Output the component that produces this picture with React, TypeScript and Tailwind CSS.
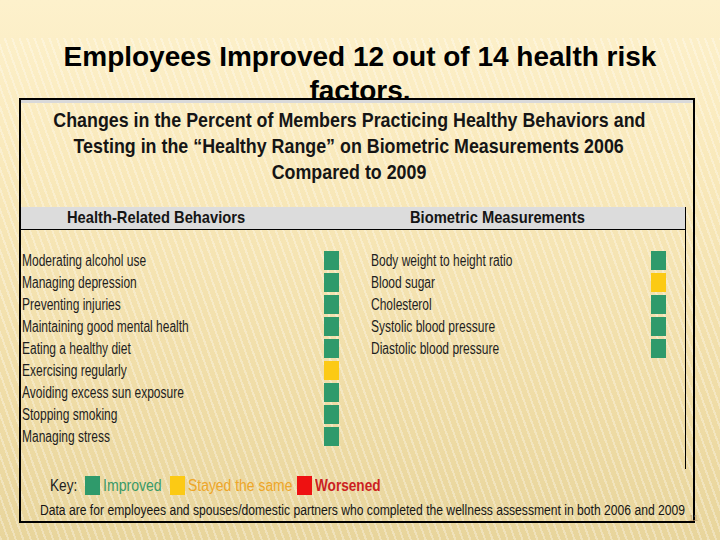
import React from 'react'

type Mark = 'g' | 'y' | 'r'

const behaviors: [string, Mark][] = [
  ['Moderating alcohol use', 'g'],
  ['Managing depression', 'g'],
  ['Preventing injuries', 'g'],
  ['Maintaining good mental health', 'g'],
  ['Eating a healthy diet', 'g'],
  ['Exercising regularly', 'y'],
  ['Avoiding excess sun exposure', 'g'],
  ['Stopping smoking', 'g'],
  ['Managing stress', 'g'],
]

const biometrics: [string, Mark][] = [
  ['Body weight to height ratio', 'g'],
  ['Blood sugar', 'y'],
  ['Cholesterol', 'g'],
  ['Systolic blood pressure', 'g'],
  ['Diastolic blood pressure', 'g'],
]

const Swatch: React.FC<{ c: Mark }> = ({ c }) => (
  <span
    className={
      'block w-[15px] h-[19px] shrink-0 ' +
      (c === 'g' ? 'bg-[#2f9a6b]' : c === 'y' ? 'bg-[#fcca14]' : 'bg-[#ee1111]')
    }
  />
)

// condensed text, like the Arial Narrow in the original chart
const TitleLine: React.FC<{ children: React.ReactNode }> = ({ children }) => (
  <div className="flex justify-center whitespace-nowrap">
    <span className="inline-block shrink-0 origin-center scale-x-[0.85]">{children}</span>
  </div>
)

export default function App() {
  return (
    <div className="relative w-[720px] h-[540px] overflow-hidden font-['Liberation_Sans',Arial,sans-serif] bg-[linear-gradient(180deg,#fdf1cc_0%,#f9e9bb_30%,#efdca6_75%,#e8d59c_100%)]">
      {/* stripes */}
      <div className="absolute inset-x-0 top-[38px] bottom-0 bg-[repeating-linear-gradient(70deg,rgba(255,255,255,0.3)_0px,rgba(255,255,255,0.3)_2px,transparent_2px,transparent_7px)]" />

      <div className="relative">
        {/* slide title */}
        <div className="h-[98px] overflow-hidden pt-[40px] text-center text-[28px] leading-[34px] font-bold text-black">
          Employees Improved 12 out of 14 health risk
          <br />
          factors.
        </div>

        {/* chart box */}
        <div className="ml-[19px] w-[676px] h-[425px] border-2 border-black flex flex-col">
          <div className="h-[3px] bg-[#d9d9d9]" />
          <div className="mt-[4px] pr-[16px] font-bold text-[21px] leading-[26px] text-[#151515]">
            <TitleLine>Changes in the Percent of Members Practicing Healthy Behaviors and</TitleLine>
            <TitleLine>Testing in the “Healthy Range” on Biometric Measurements 2006</TitleLine>
            <TitleLine>Compared to 2009</TitleLine>
          </div>

          <div className="mt-[22px] w-[665px] h-[262px] border-r-[1.5px] border-black flex flex-col">
            <div className="h-[23px] bg-[#dcdcdc] border-b border-black flex items-center font-bold text-[17px] text-[#151515] whitespace-nowrap">
              <span className="pl-[46px] w-[339px]">
                <span className="inline-block origin-left scale-x-[0.865]">Health-Related Behaviors</span>
              </span>
              <span className="pl-[50px]">
                <span className="inline-block origin-left scale-x-[0.865]">Biometric Measurements</span>
              </span>
            </div>

            <div className="flex pt-[21px] text-[16px] text-[#1e1e1e]">
              <div className="w-[318px] flex flex-col gap-[3px]">
                {behaviors.map(([label, c]) => (
                  <div key={label} className="flex items-center h-[19px] pl-[1px]">
                    <span className="w-[302px] leading-[19px] whitespace-nowrap">
                      <span className="inline-block origin-left scale-x-[0.75]">{label}</span>
                    </span>
                    <Swatch c={c} />
                  </div>
                ))}
              </div>
              <div className="flex flex-col gap-[3px] pl-[32px]">
                {biometrics.map(([label, c]) => (
                  <div key={label} className="flex items-center h-[19px]">
                    <span className="w-[280px] leading-[19px] whitespace-nowrap">
                      <span className="inline-block origin-left scale-x-[0.75]">{label}</span>
                    </span>
                    <Swatch c={c} />
                  </div>
                ))}
              </div>
            </div>
          </div>

          {/* key */}
          <div className="mt-[7px] flex items-center pl-[29px] text-[16px] leading-[19px] whitespace-nowrap">
            <span className="w-[35px] text-[#1e1e1e]">
              <span className="inline-block origin-left scale-x-[0.85]">Key:</span>
            </span>
            <Swatch c="g" />
            <span className="w-[70px] pl-[3px] text-[#3a9a68]">
              <span className="inline-block origin-left scale-x-[0.88]">Improved</span>
            </span>
            <Swatch c="y" />
            <span className="w-[112px] pl-[3px] text-[#eea628]">
              <span className="inline-block origin-left scale-x-[0.87]">Stayed the same</span>
            </span>
            <Swatch c="r" />
            <span className="pl-[3px] text-[#cc1f1f] font-bold">
              <span className="inline-block origin-left scale-x-[0.85]">Worsened</span>
            </span>
          </div>

          <div className="mt-[7px] pl-[19px] text-[14px] leading-[17px] text-[#151515] whitespace-nowrap">
            <span className="inline-block origin-left scale-x-[0.866]">
              Data are for employees and spouses/domestic partners who completed the wellness assessment in both 2006 and 2009
            </span>
          </div>
        </div>
      </div>

      <span className="absolute left-[689px] top-[512px] text-[9px] text-[#c8aa78]">11</span>
    </div>
  )
}
